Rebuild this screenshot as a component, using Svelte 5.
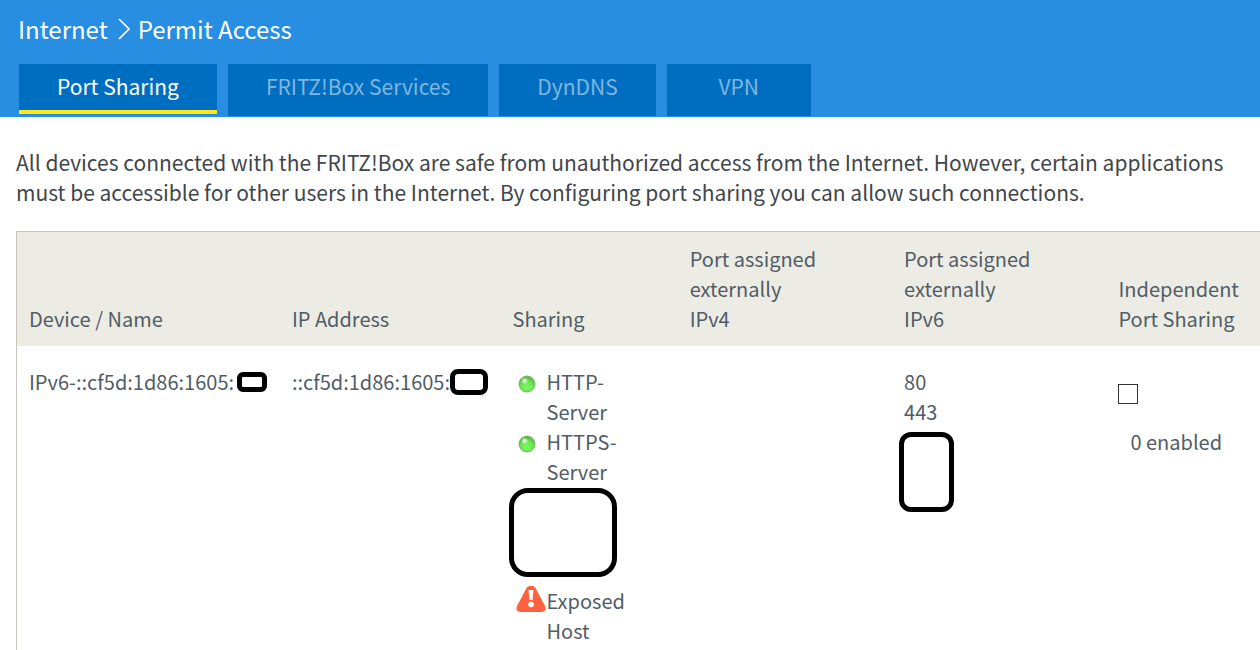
<script>
  const tabs = ['Port Sharing', 'FRITZ!Box Services', 'DynDNS', 'VPN'];
  let active = $state('Port Sharing');
  let independent = $state(false);
</script>

<header>
  <h1>
    <a href="#internet">Internet</a>
    <svg class="chevron" viewBox="0 0 12 22" aria-hidden="true"><path d="M1 1L11 11L1 21" /></svg>
    <span>Permit Access</span>
  </h1>
  <nav>
    {#each tabs as tab}
      <button class:active={tab === active} onclick={() => (active = tab)}>{tab}</button>
    {/each}
  </nav>
</header>

<main>
  <p>
    All devices connected with the FRITZ!Box are safe from unauthorized access from the Internet. However, certain
    applications must be accessible for other users in the Internet. By configuring port sharing you can allow such
    connections.
  </p>

  <table>
    <colgroup>
      <col class="device" /><col class="address" /><col class="sharing" /><col class="port" /><col class="port" /><col />
    </colgroup>
    <thead>
      <tr>
        <th>Device / Name</th>
        <th>IP Address</th>
        <th>Sharing</th>
        <th>Port assigned<br />externally<br />IPv4</th>
        <th>Port assigned<br />externally<br />IPv6</th>
        <th id="independent">Independent<br />Port Sharing</th>
      </tr>
    </thead>
    <tbody>
      <tr>
        <td><div class="line">IPv6-::cf5d:1d86:1605:<span class="mask mask-name"></span></div></td>
        <td><div class="line">::cf5d:1d86:1605:<span class="mask mask-ip"></span></div></td>
        <td>
          <ul>
            {#each ['HTTP-', 'HTTPS-'] as name}
              <li>
                <span class="icon">
                  <svg class="led" viewBox="0 0 18 18" aria-hidden="true">
                    <defs>
                      <radialGradient id="glow-{name}" cx="50%" cy="72%" r="65%">
                        <stop offset="0" stop-color="#77fb62" />
                        <stop offset="0.6" stop-color="#6be653" />
                        <stop offset="1" stop-color="#5cba44" />
                      </radialGradient>
                      <radialGradient id="shine-{name}">
                        <stop offset="0" stop-color="#fff" />
                        <stop offset="1" stop-color="#fff" stop-opacity="0" />
                      </radialGradient>
                    </defs>
                    <circle cx="9" cy="9" r="8.7" fill="#b5cda8" opacity="0.6" />
                    <circle cx="9" cy="9" r="7.8" fill="url(#glow-{name})" stroke="#6cb357" stroke-width="0.8" />
                    <circle cx="6.6" cy="5.8" r="3.6" fill="url(#shine-{name})" />
                  </svg>
                </span>
                <span>{name}<br />Server</span>
              </li>
            {/each}
          </ul>
          <div class="mask mask-sharing"></div>
          <ul>
            <li>
              <span class="icon">
                <svg class="warning" viewBox="0 0 30 26" aria-hidden="true">
                  <path
                    fill="#ff623e"
                    d="M13 0H17Q18.5 .3 19.5 2L29 20Q31 25 26 26H4Q-1 25 1 20L10.500 2Q11.500 .3 13 0Z"
                  />
                  <path fill="#fff" d="M12.500 4H17.500L16.500 14H13.500Z" />
                  <circle cx="15" cy="18.500" r="2.800" fill="#fff" />
                </svg>
              </span>
              <span>Exposed<br />Host</span>
            </li>
          </ul>
        </td>
        <td></td>
        <td>
          80<br />443
          <div class="mask mask-port"></div>
        </td>
        <td>
          <input type="checkbox" aria-labelledby="independent" bind:checked={independent} />
          <div class="enabled">0 enabled</div>
        </td>
      </tr>
    </tbody>
  </table>
</main>

<style>
  :global(body) {
    margin: 0;
    background: #fff;
    color: #3f464c;
    font: 21px/30px 'Noto Sans CJK SC', 'Noto Sans', sans-serif;
    overflow-x: hidden;
  }
  header {
    background: #278ee1;
    padding: 14px 18px 1px;
  }
  h1 {
    display: flex;
    align-items: center;
    gap: 10px;
    margin: 0 0 20px;
    color: #fff;
    font-size: 24px;
    font-weight: 400;
    line-height: 30px;
  }
  h1 span {
    margin-left: -2px;
  }
  h1 a {
    color: inherit;
    text-decoration: none;
  }
  .chevron {
    width: 12px;
    height: 22px;
    fill: none;
    stroke: #fff;
    stroke-width: 1.6;
  }
  nav {
    display: flex;
    align-items: flex-start;
    gap: 11px;
    padding-left: 1px;
  }
  nav button {
    box-sizing: border-box;
    min-width: 144px;
    height: 52px;
    padding: 0 38px 8px;
    border: 0;
    background: #006ec0;
    color: #80b6df;
    font: inherit;
    line-height: 44px;
    cursor: pointer;
  }
  nav button.active {
    height: 50px;
    padding-bottom: 2px;
    border-bottom: 4px solid #ffe814;
    color: #fff;
  }
  main {
    padding: 30px 0 0 16px;
  }
  p {
    margin: 0 0 24px;
  }
  table {
    width: 100%;
    table-layout: fixed;
    border-collapse: separate;
    border-spacing: 0;
    border: 1px solid #c6c6bd;
    border-right: 0;
    border-bottom: 0;
    color: #525c66;
  }
  .device {
    width: 21.150%;
  }
  .address {
    width: 17.750%;
  }
  .sharing {
    width: 14.250%;
  }
  .port {
    width: 17.250%;
  }
  th,
  td {
    padding: 12px 0 12px 12px;
    text-align: left;
    font-size: 20px;
    font-weight: 400;
  }
  th {
    background: #ecece4;
    vertical-align: bottom;
  }
  td {
    padding-top: 21px;
    vertical-align: top;
  }
  .line {
    display: flex;
    align-items: center;
    height: 30px;
    white-space: nowrap;
  }
  .mask {
    box-sizing: border-box;
    flex: none;
    border: 5px solid #000;
    background: #fff;
  }
  .mask-name {
    width: 30px;
    height: 20px;
    margin-left: 3px;
    border-radius: 6px;
  }
  .mask-ip {
    width: 38px;
    height: 26px;
    border-radius: 8px;
  }
  .mask-sharing {
    width: 108px;
    height: 89px;
    margin: 1px 0 9px -4px;
    border-radius: 19px;
  }
  .mask-port {
    width: 55px;
    height: 80px;
    margin: 5px 0 0 -5px;
    border-radius: 12px;
  }
  ul {
    margin: 0;
    padding: 0;
    list-style: none;
  }
  li {
    display: flex;
  }
  .icon {
    display: flex;
    justify-content: flex-end;
    width: 34px;
    flex: none;
  }
  .led {
    width: 18px;
    height: 18px;
    margin: 8px 11px 0 0;
  }
  .warning {
    width: 30px;
    height: 26px;
    margin-right: 1px;
  }
  input {
    display: block;
    appearance: none;
    width: 20px;
    height: 20px;
    margin: 17px 0 23px;
    border: 1px solid #333;
    background: #fff;
  }
  input:checked {
    background: #333;
    box-shadow: inset 0 0 0 4px #fff;
  }
  .enabled {
    padding-left: 12px;
  }
</style>
